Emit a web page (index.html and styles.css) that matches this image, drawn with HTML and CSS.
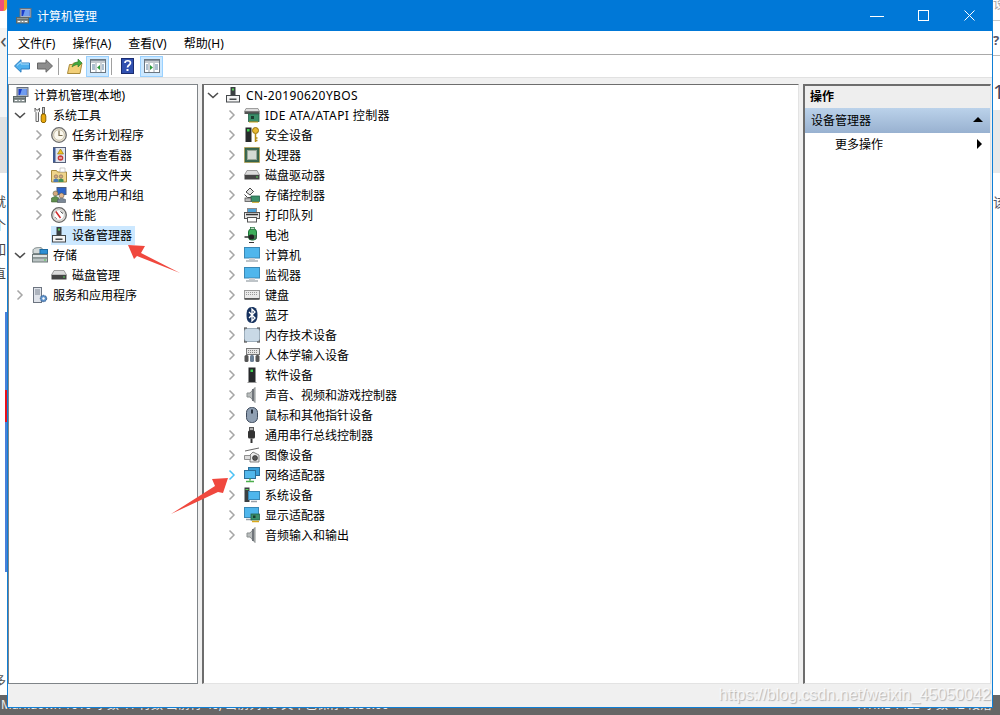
FILE: index.html
```html
<!DOCTYPE html>
<html lang="zh-CN">
<head>
    <meta charset="UTF-8">
    <title>计算机管理</title>
    <link rel="stylesheet" href="styles.css">
</head>
<body>
    <svg class="sprite" xmlns="http://www.w3.org/2000/svg">
        <symbol id="i-comp" viewBox="0 0 16 16">
            <rect x="4" y="0.500" width="11" height="9" fill="#aab4c4" stroke="#66707e"/>
            <rect x="5.500" y="2" width="8" height="6" fill="#1b3ecb"/>
            <path d="M9 2h4.500v6H7z" fill="#6f9df0"/>
            <rect x="0.500" y="9.500" width="12" height="2.500" fill="#8d9898" stroke="#5c6666"/>
            <rect x="0.500" y="12" width="12" height="3" fill="#a5aeae" stroke="#5c6666"/>
            <path d="M2 13.500h2M6 13.500h1M9 13.500h2" stroke="#fff"/>
        </symbol>
        <symbol id="i-tools" viewBox="0 0 16 16">
            <path d="M3 1v3.500l1 1V14.500h2.500V5.500l1-1V1L6 3H4.500z" fill="#f3f3f3" stroke="#666" stroke-width="1"/>
            <rect x="10.500" y="0.500" width="2" height="6" fill="#c9c9c9" stroke="#666"/>
            <path d="M10 7h3l.8 2v5l-1 1.500h-2.600l-1-1.500V9z" fill="#e8a80c" stroke="#8a6200"/>
        </symbol>
        <symbol id="i-clock" viewBox="0 0 16 16">
            <circle cx="8" cy="8" r="7.300" fill="#ece6d6" stroke="#6d6d6d" stroke-width="1.300"/>
            <circle cx="8" cy="8" r="5.300" fill="#fbf8ee" stroke="#b7ae95" stroke-width=".7"/>
            <path d="M8 3.500V8.500H11.500" fill="none" stroke="#7a6d4e" stroke-width="1.200"/>
        </symbol>
        <symbol id="i-event" viewBox="0 0 16 16">
            <rect x="2.500" y="0.500" width="12" height="15" fill="#dfe5ef" stroke="#56607a"/>
            <rect x="2" y="1" width="2.500" height="14" fill="#3f5a92"/>
            <path d="M9.500 2l3 5h-6z" fill="#f0c020" stroke="#8a6d00" stroke-width=".6"/>
            <circle cx="9.500" cy="11" r="2.800" fill="#c93a3a"/>
            <path d="M8 11h3" stroke="#fff"/>
        </symbol>
        <symbol id="i-share" viewBox="0 0 16 16">
            <path d="M0.500 3.500h5l1 1.500h9v10h-15z" fill="#f0d48a" stroke="#a78a3e"/>
            <path d="M9 1h5v4H9z" fill="#fff" stroke="#b8b8b8" stroke-width=".7"/>
            <circle cx="5" cy="9.500" r="1.700" fill="#d9a77a" stroke="#5c5c5c" stroke-width=".5"/>
            <path d="M2.500 15v-2.500l2.500-1 2.500 1V15z" fill="#4a7ab5"/>
            <circle cx="10" cy="9.500" r="1.700" fill="#d9a77a" stroke="#5c5c5c" stroke-width=".5"/>
            <path d="M7.500 15v-2.500l2.500-1 2.500 1V15z" fill="#3f8f55"/>
        </symbol>
        <symbol id="i-users" viewBox="0 0 16 16">
            <rect x="6" y="0.500" width="9" height="7" fill="#2c63c8" stroke="#4a5d80"/>
            <circle cx="4.500" cy="6.500" r="2.500" fill="#d6a87c" stroke="#5a6a50" stroke-width=".6"/>
            <path d="M0.500 15v-4l4-1.800 3 1.500V15z" fill="#5f8f4d" stroke="#3d5f30" stroke-width=".6"/>
            <circle cx="10.500" cy="8.500" r="2.500" fill="#e2b78e" stroke="#60584d" stroke-width=".6"/>
            <path d="M6.500 15.500v-3l4-1.300 4 1.300v3z" fill="#7a8796" stroke="#4d5560" stroke-width=".6"/>
        </symbol>
        <symbol id="i-perf" viewBox="0 0 16 16">
            <circle cx="8" cy="8" r="7.300" fill="#e4e2dc" stroke="#666" stroke-width="1.300"/>
            <circle cx="8" cy="8" r="5.300" fill="#fff" stroke="#a9a9a9" stroke-width=".6"/>
            <path d="M4.800 4.500L9.500 11" stroke="#d02828" stroke-width="1.500"/>
            <path d="M9.500 4.500l2.500 2M4.500 10.500l1 1" stroke="#333" stroke-width="1"/>
        </symbol>
        <symbol id="i-dev" viewBox="0 0 16 16">
            <rect x="5.500" y="0" width="5" height="8.500" fill="#3a3f42"/>
            <rect x="7" y="1.500" width="2" height="2" fill="#58d058"/>
            <rect x="1.500" y="8.500" width="13" height="6.500" fill="#f4f4f4" stroke="#45494c"/>
            <rect x="4.500" y="11.500" width="7" height="1.500" fill="#45494c"/>
        </symbol>
        <symbol id="i-storage" viewBox="0 0 16 16">
            <path d="M1 3.500C1 1 5 .5 7.500.5S11 2 11 4v2.500H1z" fill="#d2d8d8" stroke="#7a8585"/>
            <rect x="8" y="2.500" width="7.500" height="4.500" fill="#2d8fd5" stroke="#1d6aa0"/>
            <rect x="0.500" y="7.500" width="15" height="3.500" fill="#dfe4e4" stroke="#6f7a7a"/>
            <rect x="0.500" y="11" width="15" height="4" fill="#b9c2c2" stroke="#6f7a7a"/>
            <path d="M12 13h2" stroke="#4fd04f" stroke-width="1.200"/>
        </symbol>
        <symbol id="i-disk" viewBox="0 0 16 16">
            <path d="M3 3.500h10l2.500 4.500H.5z" fill="#dcdcdc" stroke="#8a8a8a" stroke-width=".8"/>
            <rect x="0.500" y="8" width="15" height="4.500" fill="#444"/>
            <path d="M12 10h2" stroke="#58d058" stroke-width="1.200"/>
        </symbol>
        <symbol id="i-svc" viewBox="0 0 16 16">
            <rect x="1.500" y="0.500" width="8" height="15" fill="#dfe3ea" stroke="#6c7480"/>
            <path d="M3 3h5M3 5h5M3 7h5" stroke="#7a8390"/>
            <circle cx="11.500" cy="11.500" r="3.200" fill="#5a8fc8" stroke="#3a5f8c" stroke-dasharray="1.500 .8"/>
            <circle cx="11.500" cy="11.500" r="1.200" fill="#fff"/>
        </symbol>
        <symbol id="i-ide" viewBox="0 0 16 16">
            <path d="M2 1.500h12l1.500 3H.5z" fill="#dcdcdc" stroke="#8a8a8a" stroke-width=".8"/>
            <rect x="0.500" y="4.500" width="15" height="2.500" fill="#555"/>
            <rect x="4.500" y="7" width="10.500" height="7.500" fill="#3a8f6a" stroke="#24604a" stroke-width=".8"/>
            <rect x="7" y="9" width="3" height="3" fill="#1a3d30"/>
            <path d="M5 15h9" stroke="#c9a21a"/>
        </symbol>
        <symbol id="i-sec" viewBox="0 0 16 16">
            <rect x="1.500" y="0.500" width="6" height="14.500" fill="#26292b"/>
            <rect x="3" y="2" width="2.500" height="2.500" fill="#3fd04f"/>
            <circle cx="11.500" cy="3.500" r="3" fill="#e8b830" stroke="#96720c"/>
            <path d="M11.500 6.500V15M11.500 11h2M11.500 13.500h2" stroke="#b58c14" stroke-width="1.500"/>
        </symbol>
        <symbol id="i-cpu" viewBox="0 0 16 16">
            <rect x="0.500" y="0.500" width="15" height="15" fill="#2f5d45" stroke="#c59a2a" stroke-dasharray="1 1"/>
            <rect x="1.500" y="1.500" width="13" height="13" fill="#3d6a52"/>
            <rect x="3.500" y="3.500" width="9" height="9" fill="#d4dbd4" stroke="#9aa79a"/>
        </symbol>
        <symbol id="i-stor" viewBox="0 0 16 16">
            <path d="M2 5L6 1l3.500 3.500L6 8z" fill="#e6e6e6" stroke="#444"/>
            <path d="M0.500 7.500l3 3h4" fill="none" stroke="#444"/>
            <rect x="7" y="9" width="8.500" height="5.500" fill="#3a8f6a" stroke="#24604a" stroke-width=".8"/>
            <rect x="1" y="11" width="6" height="3.500" fill="#bbb" stroke="#555" stroke-width=".8"/>
            <path d="M8 15.300h7" stroke="#c9a21a"/>
        </symbol>
        <symbol id="i-print" viewBox="0 0 16 16">
            <rect x="3.500" y="1.500" width="9" height="4" fill="#4aa0d8" stroke="#8a8a8a"/>
            <rect x="0.500" y="5.500" width="15" height="6" fill="#e6e6e6" stroke="#555"/>
            <path d="M2 7.500h12" stroke="#333" stroke-width="1.500"/>
            <rect x="3.500" y="10.500" width="9" height="4.500" fill="#fff" stroke="#555"/>
        </symbol>
        <symbol id="i-batt" viewBox="0 0 16 16">
            <rect x="4.500" y="2" width="8" height="11" rx="3" fill="#3eae5a" stroke="#1e7038"/>
            <rect x="6.500" y="0.500" width="4" height="2" fill="#bfe0c8" stroke="#1e7038" stroke-width=".7"/>
            <path d="M0.500 10h5" stroke="#333" stroke-width="1.500"/>
            <rect x="5" y="7.500" width="5" height="5" rx="1.500" fill="#222"/>
            <path d="M10 9h3M10 11h3" stroke="#444" stroke-width="1.200"/>
            <path d="M5 15.500h5" stroke="#333"/>
        </symbol>
        <symbol id="i-mon" viewBox="0 0 16 16">
            <rect x="0.500" y="0.500" width="15" height="10.500" fill="#4fb6ec" stroke="#3a88b5"/>
            <path d="M5 11h6v2H5z" fill="#c8cdd2"/>
            <path d="M2 14h12" stroke="#a9b0b6" stroke-width="1.500"/>
        </symbol>
        <symbol id="i-kbd" viewBox="0 0 16 16">
            <rect x="0.500" y="3.500" width="15" height="8" fill="#eaeaea" stroke="#999"/>
            <path d="M2 5.500h12M2 7.500h12" stroke="#9a9a9a" stroke-dasharray="1 1"/>
            <path d="M0.500 12h15" stroke="#444" stroke-width="1.500"/>
        </symbol>
        <symbol id="i-bt" viewBox="0 0 16 16">
            <path d="M8 0c4 0 5.500 3 5.500 8S12 16 8 16 2.500 13 2.500 8 4 0 8 0z" fill="#16325f"/>
            <path d="M5 5l6 6-3 3V2l3 3-6 6" fill="none" stroke="#fff" stroke-width="1.300"/>
        </symbol>
        <symbol id="i-mem" viewBox="0 0 16 16">
            <rect x="0.500" y="1.500" width="15" height="13" rx="2" fill="#c9d9e6" stroke="#9cadbb"/>
            <path d="M0 3.500V1h3M13 1h3v2.500M0 12.500V15h3M13 15h3v-2.500" fill="none" stroke="#333"/>
        </symbol>
        <symbol id="i-hid" viewBox="0 0 16 16">
            <rect x="2.500" y="1.500" width="13" height="6" fill="#e4e4e4" stroke="#777"/>
            <path d="M4 3.500h10M4 5.500h10" stroke="#888" stroke-dasharray="1 1"/>
            <rect x="0.500" y="8" width="4" height="7" rx="1.500" fill="#555"/>
            <rect x="6" y="8" width="4" height="7" rx="1.500" fill="#6a7f96"/>
            <rect x="11.500" y="8" width="4" height="7" rx="1.500" fill="#555"/>
        </symbol>
        <symbol id="i-soft" viewBox="0 0 16 16">
            <rect x="4.500" y="0.500" width="7" height="14.500" fill="#26292b"/>
            <rect x="6.500" y="2.500" width="2.500" height="2.500" fill="#3fd04f"/>
            <path d="M3.500 15.500h9" stroke="#999"/>
        </symbol>
        <symbol id="i-snd" viewBox="0 0 16 16">
            <path d="M3 6h3l5-5.500V15.500L6 10H3z" fill="#b9bdbd" stroke="#8a8f8f"/>
            <path d="M9 2v12" stroke="#70757a" stroke-width="2"/>
        </symbol>
        <symbol id="i-mouse" viewBox="0 0 16 16">
            <rect x="2.500" y="0.500" width="11" height="15" rx="5" fill="#8f9fb2" stroke="#3d4a5c"/>
            <path d="M8 2.500v4" stroke="#26303c" stroke-width="2"/>
        </symbol>
        <symbol id="i-usb" viewBox="0 0 16 16">
            <rect x="5.500" y="0.500" width="4" height="3" fill="#aaa" stroke="#555"/>
            <rect x="4" y="3.500" width="7" height="8" rx="1.500" fill="#333"/>
            <path d="M7.500 11.500V16" stroke="#333" stroke-width="2"/>
        </symbol>
        <symbol id="i-img" viewBox="0 0 16 16">
            <path d="M1 4l14-3" stroke="#666"/>
            <path d="M9 5l6 3v7H6V8z" fill="#ececec" stroke="#666" stroke-width=".8"/>
            <path d="M0.500 8.500h6v4h-6z" fill="#ddd" stroke="#777" stroke-width=".8"/>
            <circle cx="11" cy="11" r="2.500" fill="#555" stroke="#222" stroke-width=".6"/>
        </symbol>
        <symbol id="i-net" viewBox="0 0 16 16">
            <rect x="4.500" y="0.500" width="11" height="8" fill="#3a9fd8" stroke="#2c6f99"/>
            <rect x="0.500" y="3.500" width="11" height="8" fill="#52b8ec" stroke="#2c6f99"/>
            <path d="M6 11.500v2M2 14.500h8" stroke="#4cae4c" stroke-width="1.500"/>
        </symbol>
        <symbol id="i-sys" viewBox="0 0 16 16">
            <rect x="0.500" y="0.500" width="5" height="14.500" fill="#3a3f42"/>
            <path d="M1.500 2.500h3" stroke="#58d058"/>
            <rect x="4.500" y="4.500" width="11" height="8" fill="#4fb6ec" stroke="#3a88b5"/>
            <path d="M7 14.500h6" stroke="#9aa0a6" stroke-width="1.500"/>
        </symbol>
        <symbol id="i-disp" viewBox="0 0 16 16">
            <rect x="0.500" y="0.500" width="14" height="10" fill="#4fb6ec" stroke="#3a88b5"/>
            <path d="M2 12.500h6" stroke="#9aa0a6" stroke-width="1.500"/>
            <rect x="7" y="7" width="8.500" height="6" fill="#3a8f6a" stroke="#24604a" stroke-width=".8"/>
            <rect x="9" y="8.500" width="2.500" height="2.500" fill="#1a3d30"/>
            <path d="M8 14.500h7" stroke="#d9a81a" stroke-width="1.500"/>
        </symbol>
        <symbol id="i-back" viewBox="0 0 16 14">
            <path d="M0.500 7L7 .8v3.200h8.500v6H7v3.200z" fill="#4eb0ee" stroke="#2a7cc0"/>
            <path d="M3 6.500l4-3.500v2h8" fill="none" stroke="#a9dcfa"/>
        </symbol>
        <symbol id="i-fwd" viewBox="0 0 16 14">
            <path d="M15.500 7L9 .8v3.200H.5v6H9v3.200z" fill="#8d8d8d" stroke="#666"/>
        </symbol>
        <symbol id="i-up" viewBox="0 0 16 16">
            <path d="M.5 15.500l2-9h3l1-1.500h8.500l-2 10.500z" fill="#f2cf78" stroke="#a98a3a"/>
            <path d="M5 9c1-4 4-5 6-5V1l4 4-4 4V6.500C9 6.500 7 7.500 5 9z" fill="#42a83e" stroke="#2b7a2a" stroke-width=".6"/>
        </symbol>
        <symbol id="i-pane-l" viewBox="0 0 16 14">
            <rect x="0.500" y="0.500" width="15" height="13" fill="#fff" stroke="#6b7680"/>
            <path d="M1 1.500h14M1 3h14" stroke="#8a95a0"/>
            <path d="M6 4v9M11 4v9" stroke="#9aa5b0"/>
            <path d="M2 6h3M2 8h3M2 10h3M12 6h2M12 8h2M12 10h2" stroke="#5a7fa0"/>
            <path d="M10 6v5L7 8.500z" fill="#2c9a3a"/>
        </symbol>
        <symbol id="i-pane-r" viewBox="0 0 16 14">
            <rect x="0.500" y="0.500" width="15" height="13" fill="#fff" stroke="#6b7680"/>
            <path d="M1 1.500h14M1 3h14" stroke="#8a95a0"/>
            <path d="M5 4v9M10 4v9" stroke="#9aa5b0"/>
            <path d="M2 6h2M2 8h2M2 10h2M11 6h3M11 8h3M11 10h3" stroke="#5a7fa0"/>
            <path d="M6 6v5l3-2.500z" fill="#2c9a3a"/>
        </symbol>
        <symbol id="i-help" viewBox="0 0 13 16">
            <rect x="0.500" y="0.500" width="12" height="15" fill="#3050b0" stroke="#1a2c70"/>
            <path d="M4 5c0-3 5.500-3 5.500 0 0 2-3 2-3 4.500" fill="none" stroke="#fff" stroke-width="1.700"/>
            <rect x="5.500" y="11" width="2" height="2" fill="#fff"/>
        </symbol>
        <symbol id="c-open" viewBox="0 0 12 12">
            <path d="M1 4l5 4.500L11 4" fill="none" stroke="#4d4d4d" stroke-width="1.600"/>
        </symbol>
        <symbol id="c-shut" viewBox="0 0 12 12">
            <path d="M3.500 1.500L8 6l-4.500 4.500" fill="none" stroke="#a6a6a6" stroke-width="1.500"/>
        </symbol>
    </svg>

    <div class="backdrop">
        <div class="bd-logo"></div>
        <div class="bd-tab">&lsaquo;</div>
        <div class="bd-pale"></div>
        <div class="bd-grey"></div>
        <div class="bd-chars">
            <span>就</span><span>个</span><span>如</span><span>直</span>
        </div>
        <div class="bd-bar"><div class="bd-red"></div></div>
        <div class="bd-foot">多</div>
        <div class="bd-right-top">设</div>
        <div class="bd-right-band"></div>
        <div class="bd-right-mark">?</div>
        <div class="bd-right-num">1</div>
        <div class="bd-right-grey"></div>
        <div class="bd-right-char">该</div>
        <div class="bd-status">
            <span>Markdown 1010 字数 41 行数 当前行 40, 当前列 10 文章已保存18:50:00</span>
            <span>HTML 1423 字数 42 段落</span>
        </div>
    </div>

    <div class="window">
        <header class="titlebar">
            <svg class="icon"><use href="#i-comp"/></svg>
            <span class="title">计算机管理</span>
            <div class="controls">
                <div class="ctl">
                    <svg width="14" height="14" viewBox="0 0 14 14"><path d="M0 7.500h14" stroke="#fff"/></svg>
                </div>
                <div class="ctl">
                    <svg width="11" height="11" viewBox="0 0 11 11"><rect x="0.500" y="0.500" width="10" height="10" fill="none" stroke="#fff"/></svg>
                </div>
                <div class="ctl">
                    <svg width="11" height="11" viewBox="0 0 11 11"><path d="M.5 .5l10 10M10.500 .5l-10 10" stroke="#fff"/></svg>
                </div>
            </div>
        </header>

        <nav class="menubar">
            <span>文件(F)</span>
            <span>操作(A)</span>
            <span>查看(V)</span>
            <span>帮助(H)</span>
        </nav>

        <div class="toolbar">
            <div class="tool"><svg class="icon-w"><use href="#i-back"/></svg></div>
            <div class="tool"><svg class="icon-w"><use href="#i-fwd"/></svg></div>
            <div class="sep"></div>
            <div class="tool"><svg class="icon"><use href="#i-up"/></svg></div>
            <div class="tool on"><svg class="icon-w"><use href="#i-pane-l"/></svg></div>
            <div class="sep"></div>
            <div class="tool"><svg class="icon-h"><use href="#i-help"/></svg></div>
            <div class="tool on last"><svg class="icon-w"><use href="#i-pane-r"/></svg></div>
        </div>

        <div class="panes">
            <section class="pane pane-tree">
                <div class="row lvl-0"><svg class="icon"><use href="#i-comp"/></svg><span>计算机管理(本地)</span></div>
                <div class="row lvl-1"><svg class="chev"><use href="#c-open"/></svg><svg class="icon"><use href="#i-tools"/></svg><span>系统工具</span></div>
                <div class="row lvl-2"><svg class="chev"><use href="#c-shut"/></svg><svg class="icon"><use href="#i-clock"/></svg><span>任务计划程序</span></div>
                <div class="row lvl-2"><svg class="chev"><use href="#c-shut"/></svg><svg class="icon"><use href="#i-event"/></svg><span>事件查看器</span></div>
                <div class="row lvl-2"><svg class="chev"><use href="#c-shut"/></svg><svg class="icon"><use href="#i-share"/></svg><span>共享文件夹</span></div>
                <div class="row lvl-2"><svg class="chev"><use href="#c-shut"/></svg><svg class="icon"><use href="#i-users"/></svg><span>本地用户和组</span></div>
                <div class="row lvl-2"><svg class="chev"><use href="#c-shut"/></svg><svg class="icon"><use href="#i-perf"/></svg><span>性能</span></div>
                <div class="row lvl-2 leaf"><div class="picked"><svg class="icon"><use href="#i-dev"/></svg><span>设备管理器</span></div></div>
                <div class="row lvl-1"><svg class="chev"><use href="#c-open"/></svg><svg class="icon"><use href="#i-storage"/></svg><span>存储</span></div>
                <div class="row lvl-2 leaf"><svg class="icon"><use href="#i-disk"/></svg><span>磁盘管理</span></div>
                <div class="row lvl-1"><svg class="chev"><use href="#c-shut"/></svg><svg class="icon"><use href="#i-svc"/></svg><span>服务和应用程序</span></div>
            </section>

            <section class="pane pane-devices">
                <div class="row dev-root"><svg class="chev"><use href="#c-open"/></svg><svg class="icon"><use href="#i-dev"/></svg><span class="wide">CN-20190620YBOS</span></div>
                <div class="row dev-item"><svg class="chev"><use href="#c-shut"/></svg><svg class="icon"><use href="#i-ide"/></svg><span class="wide">IDE ATA/ATAPI 控制器</span></div>
                <div class="row dev-item"><svg class="chev"><use href="#c-shut"/></svg><svg class="icon"><use href="#i-sec"/></svg><span>安全设备</span></div>
                <div class="row dev-item"><svg class="chev"><use href="#c-shut"/></svg><svg class="icon"><use href="#i-cpu"/></svg><span>处理器</span></div>
                <div class="row dev-item"><svg class="chev"><use href="#c-shut"/></svg><svg class="icon"><use href="#i-disk"/></svg><span>磁盘驱动器</span></div>
                <div class="row dev-item"><svg class="chev"><use href="#c-shut"/></svg><svg class="icon"><use href="#i-stor"/></svg><span>存储控制器</span></div>
                <div class="row dev-item"><svg class="chev"><use href="#c-shut"/></svg><svg class="icon"><use href="#i-print"/></svg><span>打印队列</span></div>
                <div class="row dev-item"><svg class="chev"><use href="#c-shut"/></svg><svg class="icon"><use href="#i-batt"/></svg><span>电池</span></div>
                <div class="row dev-item"><svg class="chev"><use href="#c-shut"/></svg><svg class="icon"><use href="#i-mon"/></svg><span>计算机</span></div>
                <div class="row dev-item"><svg class="chev"><use href="#c-shut"/></svg><svg class="icon"><use href="#i-mon"/></svg><span>监视器</span></div>
                <div class="row dev-item"><svg class="chev"><use href="#c-shut"/></svg><svg class="icon"><use href="#i-kbd"/></svg><span>键盘</span></div>
                <div class="row dev-item"><svg class="chev"><use href="#c-shut"/></svg><svg class="icon"><use href="#i-bt"/></svg><span>蓝牙</span></div>
                <div class="row dev-item"><svg class="chev"><use href="#c-shut"/></svg><svg class="icon"><use href="#i-mem"/></svg><span>内存技术设备</span></div>
                <div class="row dev-item"><svg class="chev"><use href="#c-shut"/></svg><svg class="icon"><use href="#i-hid"/></svg><span>人体学输入设备</span></div>
                <div class="row dev-item"><svg class="chev"><use href="#c-shut"/></svg><svg class="icon"><use href="#i-soft"/></svg><span>软件设备</span></div>
                <div class="row dev-item"><svg class="chev"><use href="#c-shut"/></svg><svg class="icon"><use href="#i-snd"/></svg><span>声音、视频和游戏控制器</span></div>
                <div class="row dev-item"><svg class="chev"><use href="#c-shut"/></svg><svg class="icon"><use href="#i-mouse"/></svg><span>鼠标和其他指针设备</span></div>
                <div class="row dev-item"><svg class="chev"><use href="#c-shut"/></svg><svg class="icon"><use href="#i-usb"/></svg><span>通用串行总线控制器</span></div>
                <div class="row dev-item"><svg class="chev"><use href="#c-shut"/></svg><svg class="icon"><use href="#i-img"/></svg><span>图像设备</span></div>
                <div class="row dev-item hot"><svg class="chev" viewBox="0 0 12 12"><path d="M3.500 1.500L8 6l-4.500 4.500" fill="none" stroke="#4cc2f5" stroke-width="1.500"/></svg><svg class="icon"><use href="#i-net"/></svg><span>网络适配器</span></div>
                <div class="row dev-item"><svg class="chev"><use href="#c-shut"/></svg><svg class="icon"><use href="#i-sys"/></svg><span>系统设备</span></div>
                <div class="row dev-item"><svg class="chev"><use href="#c-shut"/></svg><svg class="icon"><use href="#i-disp"/></svg><span>显示适配器</span></div>
                <div class="row dev-item"><svg class="chev"><use href="#c-shut"/></svg><svg class="icon"><use href="#i-snd"/></svg><span>音频输入和输出</span></div>
            </section>

            <aside class="pane pane-actions">
                <div class="act-head">操作</div>
                <div class="act-section"><span>设备管理器</span><i class="tri-up"></i></div>
                <div class="act-item"><span>更多操作</span><i class="tri-right"></i></div>
            </aside>
        </div>

        <footer class="statusbar"></footer>
    </div>

    <svg class="arrows" viewBox="0 0 1000 715">
        <polygon points="128,245 145,246 141,253 180,273 137,256 134,259" fill="#f0483e"/>
        <polygon points="228,478 212,479 215,486 171,514 218,492 223,493" fill="#f0483e"/>
    </svg>

    <div class="watermark">https://blog.csdn.net/weixin_45050042</div>
</body>
</html>
```

FILE: styles.css
```css
* {
    box-sizing: border-box;
}

html, body {
    margin: 0;
    height: 100%;
}

body {
    position: relative;
    width: 1000px;
    height: 715px;
    overflow: hidden;
    background: #fff;
    font-family: "Noto Sans", "Noto Sans CJK SC", sans-serif;
    font-size: 12px;
    color: #000;
}

.sprite {
    display: none;
}

svg {
    display: block;
    flex: none;
}

.icon {
    width: 16px;
    height: 16px;
}

.icon-w {
    width: 16px;
    height: 14px;
}

.icon-h {
    width: 13px;
    height: 16px;
}

/* what shows of the page behind the window */
.backdrop {
    position: absolute;
    inset: 0;
    overflow: hidden;
}

.bd-logo {
    position: absolute;
    left: 0;
    top: 0;
    width: 7px;
    height: 11px;
    background: #f0507a;
    border-bottom-right-radius: 4px;
    border-right: 3px solid #f5a623;
}

.bd-tab {
    position: absolute;
    left: 0;
    top: 28px;
    width: 7px;
    height: 24px;
    font-size: 22px;
    line-height: 22px;
    color: #555;
    background: #f4f4f4;
}

.bd-pale {
    position: absolute;
    left: 0;
    top: 52px;
    width: 7px;
    height: 65px;
    background: #f4f4f4;
}

.bd-grey {
    position: absolute;
    left: 0;
    top: 117px;
    width: 7px;
    height: 56px;
    background: #e2e2e2;
}

.bd-chars {
    position: absolute;
    left: -7px;
    top: 193px;
    display: flex;
    flex-direction: column;
    gap: 8px;
    font-size: 13px;
    line-height: 16px;
    color: #444;
}

.bd-bar {
    position: absolute;
    left: 5px;
    top: 312px;
    width: 2px;
    height: 260px;
    padding-top: 78px;
    background: #4a7fd8;
}

.bd-red {
    height: 32px;
    background: #e8101c;
}

.bd-foot {
    position: absolute;
    left: -7px;
    top: 670px;
    font-size: 13px;
    color: #555;
}

.bd-right-top {
    position: absolute;
    left: 993px;
    top: -7px;
    font-size: 13px;
    color: #aaa;
}

.bd-right-band {
    position: absolute;
    left: 993px;
    top: 20px;
    width: 7px;
    height: 36px;
    border-top: 1px solid #c8c8c8;
    border-bottom: 1px solid #bbb;
}

.bd-right-mark {
    position: absolute;
    left: 993px;
    top: 31px;
    font-size: 13px;
    font-weight: 700;
    color: #556;
}

.bd-right-num {
    position: absolute;
    left: 993px;
    top: 78px;
    font-size: 20px;
    color: #445;
}

.bd-right-grey {
    position: absolute;
    left: 993px;
    top: 110px;
    width: 7px;
    height: 63px;
    background: #e9e9e9;
}

.bd-right-char {
    position: absolute;
    left: 993px;
    top: 192px;
    font-size: 13px;
    color: #556;
}

.bd-status {
    position: absolute;
    left: 0;
    right: 0;
    top: 695px;
    bottom: 0;
    display: flex;
    justify-content: space-between;
    padding: 1px 8px 0 1px;
    background: #666;
    color: #eee;
    font-size: 12px;
    line-height: 17px;
    white-space: nowrap;
}

/* the window itself */
.window {
    position: absolute;
    left: 7px;
    top: 0;
    width: 986px;
    height: 708px;
    display: flex;
    flex-direction: column;
    background: #f0f0f0;
    border: 1px solid #0f7fd6;
    border-top: 0;
}

.titlebar {
    height: 31px;
    flex: none;
    display: flex;
    align-items: center;
    padding-left: 8px;
    background: #0078d7;
    color: #fff;
}

.title {
    margin-left: 5px;
}

.controls {
    display: flex;
    margin-left: auto;
    align-self: stretch;
}

.ctl {
    width: 46px;
    display: flex;
    align-items: center;
    justify-content: center;
}

.menubar {
    height: 24px;
    flex: none;
    display: flex;
    align-items: center;
    gap: 17px;
    padding-left: 10px;
    background: #fff;
    border-bottom: 1px solid #a9a9a9;
}

.toolbar {
    height: 23px;
    flex: none;
    display: flex;
    align-items: center;
    padding-left: 2px;
    background: #fff;
    border-bottom: 1px solid #e1e1e1;
}

.tool {
    width: 23px;
    height: 21px;
    display: flex;
    align-items: center;
    justify-content: center;
}

.tool.on {
    background: #cce8ff;
    border: 1px solid #99d1ff;
}

.tool.last {
    margin-left: 1px;
}

.sep {
    width: 1px;
    height: 17px;
    margin: 0 4px 0 2px;
    background: #a0a0a0;
}

.panes {
    flex: 1;
    min-height: 0;
    display: flex;
    gap: 4px;
    padding: 6px 1px 0 0;
}

.pane {
    background: #fff;
    overflow: hidden;
}

.pane-tree {
    width: 190px;
    border: 1px solid #7f8488;
}

.pane-devices {
    width: 597px;
    border: 1px solid #e3e3e3;
    border-top-color: #6d6d6d;
    border-left: 2px solid #6d6d6d;
}

.pane-actions {
    flex: 1;
    border: 1px solid #e3e3e3;
    border-top: 2px solid #6d6d6d;
    border-left: 2px solid #6d6d6d;
}

.row {
    height: 20px;
    display: flex;
    align-items: center;
    white-space: nowrap;
}

.row span {
    margin-left: 5px;
}

.row .wide {
    letter-spacing: 0.4px;
}

.chev {
    width: 12px;
    height: 12px;
    margin-right: 6px;
}

.lvl-0 {
    padding-left: 4px;
}

.lvl-1 {
    padding-left: 5px;
}

.lvl-2 {
    padding-left: 24px;
}

.lvl-2.leaf {
    padding-left: 42px;
}

.picked {
    display: flex;
    align-items: center;
    height: 19px;
    padding-right: 3px;
    background: #cce8ff;
}

.dev-root {
    padding-left: 3px;
}

.dev-item {
    padding-left: 22px;
}

.act-head {
    height: 22px;
    display: flex;
    align-items: center;
    padding: 0 0 2px 5px;
    background: #eee;
    font-weight: 700;
}

.act-section {
    height: 25px;
    display: flex;
    align-items: center;
    justify-content: space-between;
    padding: 0 7px 2px 6px;
    background: linear-gradient(#bbd2ea, #98b1d0);
}

.act-item {
    height: 22px;
    display: flex;
    align-items: center;
    justify-content: space-between;
    padding: 0 8px 0 30px;
}

.tri-up {
    width: 0;
    height: 0;
    border-left: 5px solid transparent;
    border-right: 5px solid transparent;
    border-bottom: 5px solid #000;
}

.tri-right {
    width: 0;
    height: 0;
    border-top: 5px solid transparent;
    border-bottom: 5px solid transparent;
    border-left: 5px solid #000;
}

.statusbar {
    height: 23px;
    flex: none;
    background: #f0f0f0;
}

/* annotations drawn on top of the screenshot */
.arrows {
    position: absolute;
    left: 0;
    top: 0;
    width: 1000px;
    height: 715px;
    pointer-events: none;
}

.watermark {
    position: absolute;
    right: 9px;
    top: 683px;
    font-family: "Liberation Sans", sans-serif;
    font-size: 16px;
    line-height: 24px;
    color: rgba(255, 255, 255, 0.75);
    text-shadow: 1px 1px 1px rgba(0, 0, 0, 0.25);
}
```
